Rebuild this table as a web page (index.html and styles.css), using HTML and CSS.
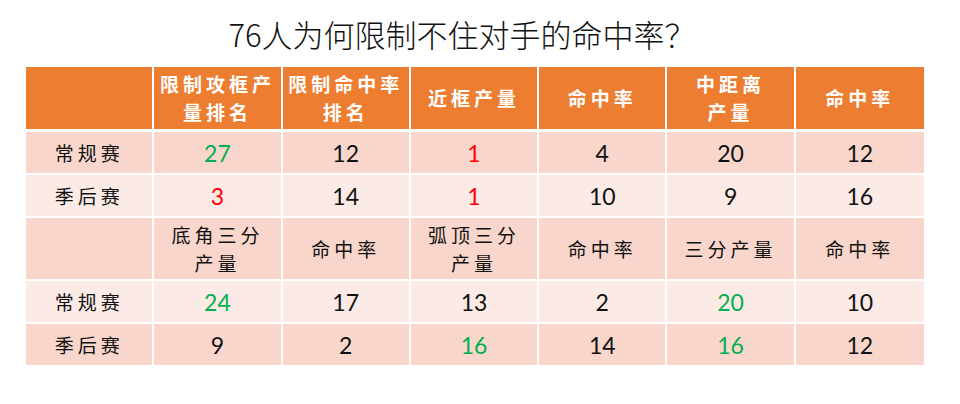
FILE: index.html
```html
<!DOCTYPE html>
<html lang="zh-CN">
<head>
<meta charset="utf-8">
<title>76人为何限制不住对手的命中率？</title>
<link rel="stylesheet" href="styles.css">
</head>
<body>
<div class="page">
  <h1 class="title">76人为何限制不住对手的命中率？</h1>
  <table class="stats">
    <colgroup>
      <col><col><col><col><col><col><col>
    </colgroup>
    <tr class="head">
      <th></th>
      <th>限制攻框产<br>量排名</th>
      <th>限制命中率<br>排名</th>
      <th>近框产量</th>
      <th>命中率</th>
      <th>中距离<br>产量</th>
      <th>命中率</th>
    </tr>
    <tr class="dark">
      <td class="lbl">常规赛</td>
      <td class="num green">27</td>
      <td class="num">12</td>
      <td class="num red">1</td>
      <td class="num">4</td>
      <td class="num">20</td>
      <td class="num">12</td>
    </tr>
    <tr class="light">
      <td class="lbl">季后赛</td>
      <td class="num red">3</td>
      <td class="num">14</td>
      <td class="num red">1</td>
      <td class="num">10</td>
      <td class="num">9</td>
      <td class="num">16</td>
    </tr>
    <tr class="dark sub">
      <td class="lbl"></td>
      <td class="lbl">底角三分<br>产量</td>
      <td class="lbl">命中率</td>
      <td class="lbl">弧顶三分<br>产量</td>
      <td class="lbl">命中率</td>
      <td class="lbl">三分产量</td>
      <td class="lbl">命中率</td>
    </tr>
    <tr class="light">
      <td class="lbl">常规赛</td>
      <td class="num green">24</td>
      <td class="num">17</td>
      <td class="num">13</td>
      <td class="num">2</td>
      <td class="num green">20</td>
      <td class="num">10</td>
    </tr>
    <tr class="dark last">
      <td class="lbl">季后赛</td>
      <td class="num">9</td>
      <td class="num">2</td>
      <td class="num green">16</td>
      <td class="num">14</td>
      <td class="num green">16</td>
      <td class="num">12</td>
    </tr>
  </table>
</div>
</body>
</html>
```
FILE: styles.css
```css
html, body {
  margin: 0;
  padding: 0;
  background: #ffffff;
}

.page {
  width: 960px;
  height: 404px;
  padding-left: 26px;
  box-sizing: border-box;
}

.title {
  margin: 0;
  width: 898px;
  height: 67px;
  box-sizing: border-box;
  padding-top: 14px;
  padding-right: 26px;
  text-align: center;
  font-family: "Noto Sans CJK SC", "Noto Sans", sans-serif;
  font-weight: 300;
  font-size: 31px;
  line-height: 40px;
  color: #111111;
}

.stats {
  width: 898px;
  table-layout: fixed;
  border-collapse: separate;
  border-spacing: 0;
}

.stats th,
.stats td {
  padding: 0;
  text-align: center;
  vertical-align: middle;
  border-right: 2px solid #ffffff;
  border-bottom: 2px solid #ffffff;
}

.stats th:last-child,
.stats td:last-child {
  border-right: none;
}

.head th {
  height: 62px;
  background: #ed7d31;
  color: #ffffff;
  font-family: "Noto Sans CJK SC", sans-serif;
  font-weight: 700;
  font-size: 19px;
  line-height: 28px;
  letter-spacing: 4px;
  border-bottom: 3px solid #ffffff;
}

.stats td {
  height: 41px;
}

.sub td {
  height: 61px;
}

.last td {
  border-bottom: none;
}

.dark td {
  background: #f8d6cc;
}

.light td {
  background: #fbeae6;
}

.lbl {
  font-family: "Noto Sans CJK SC", sans-serif;
  font-size: 19px;
  line-height: 28px;
  letter-spacing: 4px;
  color: #111111;
}

.num {
  font-family: Lato, "Open Sans", sans-serif;
  font-size: 23px;
  color: #111111;
}

.green {
  color: #00b050;
}

.red {
  color: #ff0000;
}
```
